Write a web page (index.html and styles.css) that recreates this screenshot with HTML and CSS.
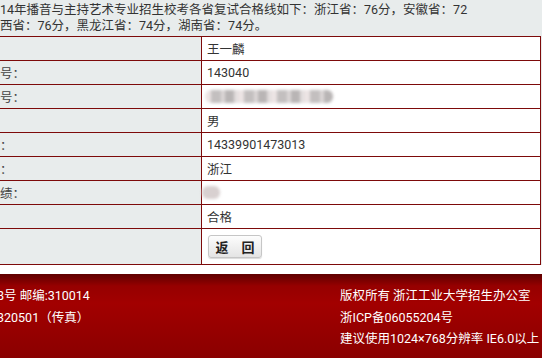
FILE: index.html
```html
<!DOCTYPE html>
<html lang="zh-CN">
<head>
    <meta charset="UTF-8">
    <title>复试成绩查询</title>
    <link rel="stylesheet" href="styles.css">
</head>
<body>
    <div class="notice">
        <p>14年播音与主持艺术专业招生校考各省复试合格线如下：浙江省：76分，安徽省：72</p>
        <p>西省：76分，黑龙江省：74分，湖南省：74分。</p>
    </div>

    <div class="result">
        <div class="row"><div class="label"></div><div class="value">王一麟</div></div>
        <div class="row"><div class="label">号：</div><div class="value">143040</div></div>
        <div class="row"><div class="label">号：</div><div class="value"><span class="masked long"></span></div></div>
        <div class="row"><div class="label"></div><div class="value">男</div></div>
        <div class="row"><div class="label">：</div><div class="value">14339901473013</div></div>
        <div class="row"><div class="label">：</div><div class="value">浙江</div></div>
        <div class="row"><div class="label">绩：</div><div class="value"><span class="masked short"></span></div></div>
        <div class="row"><div class="label"></div><div class="value">合格</div></div>
        <div class="row actions"><div class="label"></div><div class="value"><button type="button" class="btn">返　回</button></div></div>
    </div>

    <div class="footer">
        <div class="footer-left">
            <p>8号 邮编:310014</p>
            <p>320501（传真）</p>
        </div>
        <div class="footer-right">
            <p>版权所有 浙江工业大学招生办公室</p>
            <p>浙ICP备06055204号</p>
            <p>建议使用1024×768分辨率 IE6.0以上</p>
        </div>
    </div>
</body>
</html>
```

FILE: styles.css
```css
* {
    margin: 0;
    padding: 0;
    box-sizing: border-box;
}

body {
    width: 542px;
    height: 358px;
    overflow: hidden;
    background-color: #fff;
    font-family: Roboto, "Noto Sans CJK SC", sans-serif;
    font-size: 12.5px;
    color: #333;
}

.notice {
    background-color: #e8ecec;
    height: 36px;
    padding-top: 2px;
    line-height: 16px;
    white-space: nowrap;
    overflow: hidden;
}

/* result table */
.result {
    width: 542px;
    background-color: #e8ecec;
}

.row {
    display: flex;
    width: 541px;
    height: 24px;
    background-color: #fff;
    border-bottom: 1px solid #7d0a0a;
    border-right: 1px solid #7d0a0a;
}

.row:first-child {
    height: 25px;
    border-top: 1px solid #7d0a0a;
}

.row.actions {
    height: 36px;
}

.label {
    width: 202px;
    flex-shrink: 0;
    background-color: #e8ecec;
    border-right: 1px solid #7d0a0a;
    display: flex;
    align-items: center;
    color: #444;
    white-space: nowrap;
}

.value {
    flex: 1;
    padding-left: 5px;
    display: flex;
    align-items: center;
    color: #333;
    white-space: nowrap;
}

.actions .value {
    align-items: flex-start;
    padding-top: 6px;
}

.masked {
    display: inline-block;
    height: 13px;
    border-radius: 6px;
    filter: blur(1.5px);
}

.masked.long {
    width: 128px;
    margin-left: -2px;
    background: repeating-linear-gradient(90deg, #ece4e4 0 6px, #c3bfbf 6px 16px, #dcd7d7 16px 20px, #b9b5b5 20px 29px, #e2dddd 29px 33px);
}

.masked.short {
    width: 18px;
    margin-left: -5px;
    background: #d8d0d0;
}

.btn {
    margin-left: 1px;
    width: 54px;
    height: 23px;
    border: 1px solid #c6c6c6;
    border-radius: 3px;
    background: linear-gradient(#fdfdfd, #e4e4e4);
    box-shadow: 0 1px 1px rgba(0, 0, 0, 0.15);
    font-family: Roboto, "Noto Sans CJK SC", sans-serif;
    font-size: 13px;
    font-weight: bold;
    color: #222;
}

/* footer */
.footer {
    margin-top: 9px;
    height: 84px;
    display: flex;
    padding-top: 11px;
    background: linear-gradient(#5e0000 0, #960000 12px, #a20000 35%, #8a0000 100%);
    color: #fff;
    line-height: 21.5px;
    white-space: nowrap;
}

.footer-left {
    width: 340px;
    flex-shrink: 0;
    text-indent: -3px;
}
```
